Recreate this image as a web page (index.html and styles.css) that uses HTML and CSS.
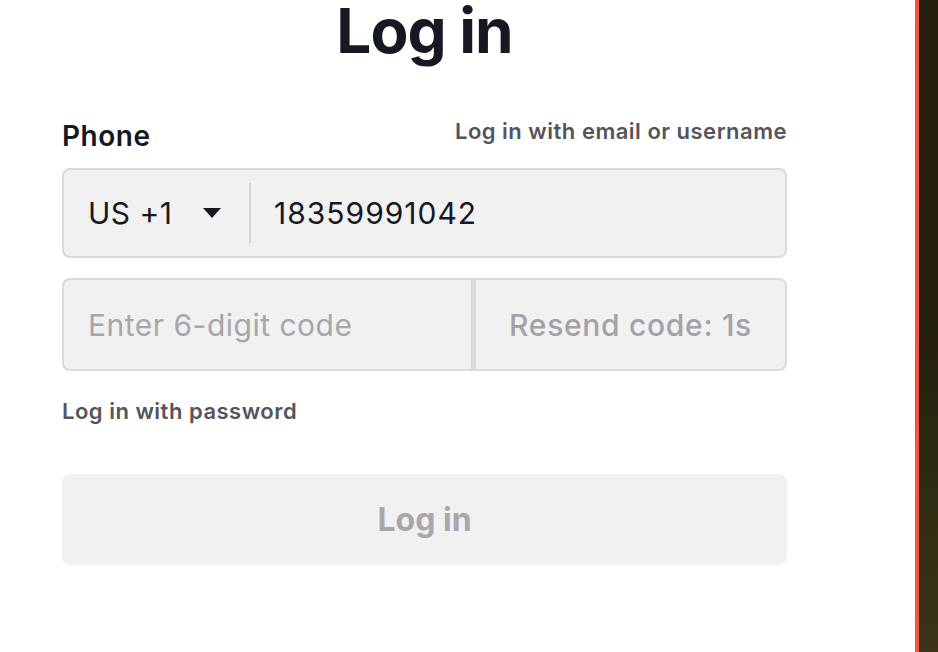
FILE: index.html
```html
<!DOCTYPE html>
<html lang="en">
<head>
<meta charset="utf-8">
<title>Log in</title>
<link rel="stylesheet" href="styles.css">
</head>
<body>
<div class="page">
  <main class="main">
    <form class="form">
      <h1 class="title">Log in</h1>
      <div class="label-row">
        <span class="label">Phone</span>
        <a class="link" href="#">Log in with email or username</a>
      </div>
      <div class="field phone">
        <div class="country">
          <span>US +1</span>
          <svg class="caret" width="18" height="10" viewBox="0 0 18 10"><path d="M0 0H18L9 10Z" fill="#161823"/></svg>
        </div>
        <span class="divider"></span>
        <span class="number">18359991042</span>
      </div>
      <div class="code-row">
        <div class="field code">
          <span class="placeholder">Enter 6-digit code</span>
        </div>
        <div class="field resend">Resend code: 1s</div>
      </div>
      <a class="link pw" href="#">Log in with password</a>
      <button class="submit" type="button">Log in</button>
    </form>
  </main>
  <aside class="side"></aside>
</div>
</body>
</html>
```

FILE: styles.css
```css
* { box-sizing: border-box; }
html, body { margin: 0; padding: 0; }
body {
  font-family: Inter, "Noto Sans", sans-serif;
  background: #ffffff;
  color: #161823;
}
.page {
  display: flex;
  width: 938px;
  height: 652px;
  overflow: hidden;
}
.main {
  flex: 1;
  padding-left: 62px;
}
.side {
  width: 23px;
  border-left: 4px solid #ef5540;
  background: linear-gradient(180deg, #24200f 0%, #261f0e 30%, #231f0d 50%, #2d2c12 75%, #3c3218 100%);
}
.form {
  width: 725px;
  display: flex;
  flex-direction: column;
}
.title {
  margin: 0;
  font-size: 62px;
  line-height: 62px;
  font-weight: 700;
  text-align: center;
  letter-spacing: -1px;
}
.label-row {
  margin-top: 56px;
  display: flex;
  justify-content: space-between;
  align-items: flex-start;
  height: 36px;
}
.label {
  font-size: 28px;
  line-height: 36px;
  font-weight: 600;
  letter-spacing: 0.5px;
}
.link {
  font-size: 22px;
  line-height: 24px;
  margin-top: 1px;
  font-weight: 600;
  letter-spacing: 0.5px;
  color: #54555c;
  text-decoration: none;
}
.field {
  background: #f1f1f2;
  border: 2px solid #dadadb;
  display: flex;
  align-items: center;
  font-size: 30px;
}
.phone {
  margin-top: 14px;
  height: 90px;
  border-radius: 8px;
  padding-left: 24px;
}
.country {
  display: flex;
  align-items: center;
  gap: 30px;
  width: 161px;
  letter-spacing: 0.5px;
}
.divider {
  width: 2px;
  height: 60px;
  background: #d4d4d6;
}
.number {
  margin-left: 23px;
  letter-spacing: 1px;
}
.code-row {
  margin-top: 20px;
  display: flex;
  height: 93px;
}
.code {
  width: 411px;
  border-radius: 8px 0 0 8px;
  padding-left: 24px;
}
.placeholder { color: #a7a7ab; letter-spacing: 0.5px; }
.resend {
  flex: 1;
  justify-content: center;
  border-left-width: 3px;
  border-radius: 0 8px 8px 0;
  color: #a2a2a7;
  font-weight: 500;
  letter-spacing: 0.7px;
}
.pw {
  margin-top: 28px;
}
.submit {
  margin-top: 51px;
  height: 91px;
  border: none;
  border-radius: 8px;
  background: #f1f1f2;
  color: #a7a7ac;
  font-family: inherit;
  font-size: 32px;
  font-weight: 700;
}
```
